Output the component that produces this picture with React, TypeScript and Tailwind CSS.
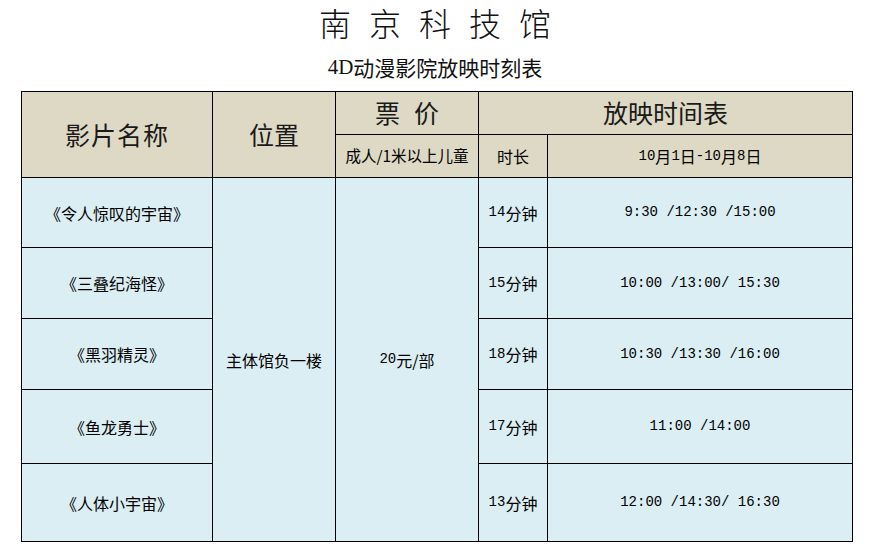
import React from "react";

const cjk = { fontFamily: '"Noto Sans CJK SC", sans-serif' };
const mono = { fontFamily: '"Liberation Mono", "Noto Sans CJK SC", monospace' };

const films = [
  { name: "《令人惊叹的宇宙》", dur: "14", times: "9:30 /12:30 /15:00" },
  { name: "《三叠纪海怪》", dur: "15", times: "10:00 /13:00/ 15:30" },
  { name: "《黑羽精灵》", dur: "18", times: "10:30 /13:30 /16:00" },
  { name: "《鱼龙勇士》", dur: "17", times: "11:00 /14:00" },
  { name: "《人体小宇宙》", dur: "13", times: "12:00 /14:30/ 16:30" },
];

const rowStarts = ["row-start-3", "row-start-4", "row-start-5", "row-start-6", "row-start-7"];

export default function App() {
  return (
    <div className="w-[870px] h-[551px] bg-white text-black overflow-hidden" style={cjk}>
      <div className="h-[44px] flex items-center justify-center gap-[18px] text-[32px] leading-none text-[#111] font-light">
        <span>南</span>
        <span>京</span>
        <span>科</span>
        <span>技</span>
        <span>馆</span>
      </div>
      <div className="h-[47px] flex items-center justify-center text-[21px] leading-none text-[#111]">
        <span style={{ fontFamily: '"Liberation Serif", serif' }}>4D</span>
        <span>动漫影院放映时刻表</span>
      </div>
      <div className="ml-[21px] w-[832px] bg-black p-px grid gap-px grid-cols-[190px_122px_142px_68px_304px] grid-rows-[42px_42px_69px_70px_70px_73px_77px]">
        <div className="col-start-1 row-start-1 row-span-2 bg-[#ddd9c4] flex items-center justify-center text-[25px] text-[#1a1a1a] tracking-[1px]">
          影片名称
        </div>
        <div className="col-start-2 row-start-1 row-span-2 bg-[#ddd9c4] flex items-center justify-center text-[25px] text-[#1a1a1a]">
          位置
        </div>
        <div className="col-start-3 row-start-1 bg-[#ddd9c4] flex items-center justify-center gap-[14px] text-[25px] text-[#1a1a1a]">
          <span>票</span>
          <span>价</span>
        </div>
        <div className="col-start-4 col-span-2 row-start-1 bg-[#ddd9c4] flex items-center justify-center text-[25px] text-[#1a1a1a]">
          放映时间表
        </div>
        <div className="col-start-3 row-start-2 bg-[#ddd9c4] flex items-center justify-center text-[15.5px] whitespace-nowrap">
          成人/1米以上儿童
        </div>
        <div className="col-start-4 row-start-2 bg-[#ddd9c4] flex items-center justify-center text-[16px]">
          时长
        </div>
        <div className="col-start-5 row-start-2 bg-[#ddd9c4] flex items-center justify-center text-[16px]">
          <span style={mono} className="text-[14px]">10</span>月
          <span style={mono} className="text-[14px]">1</span>日
          <span style={mono} className="text-[14px]">-10</span>月
          <span style={mono} className="text-[14px]">8</span>日
        </div>

        {films.map((f, i) => (
          <React.Fragment key={f.name}>
            <div className={`col-start-1 ${rowStarts[i]} bg-[#daeef3] flex items-center justify-center text-[16px]`}>
              {f.name}
            </div>
            <div className={`col-start-4 ${rowStarts[i]} bg-[#daeef3] flex items-center justify-center text-[16px]`}>
              <span style={mono} className="text-[14px]">{f.dur}</span>分钟
            </div>
            <div className={`col-start-5 ${rowStarts[i]} bg-[#daeef3] flex items-center justify-center`}>
              <span style={mono} className="text-[14px] whitespace-pre">{f.times}</span>
            </div>
          </React.Fragment>
        ))}

        <div className="col-start-2 row-start-3 row-span-5 bg-[#daeef3] flex items-center justify-center text-[16px]">
          主体馆负一楼
        </div>
        <div className="col-start-3 row-start-3 row-span-5 bg-[#daeef3] flex items-center justify-center text-[16px]">
          <span style={mono} className="text-[14px]">20</span>元/部
        </div>
      </div>
    </div>
  );
}
